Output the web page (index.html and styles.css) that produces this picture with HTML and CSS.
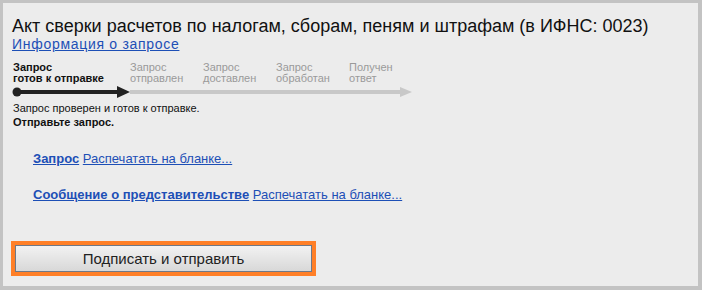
FILE: index.html
```html
<!DOCTYPE html>
<html>

<head>
    <meta name="viewport" content="width=device-width,initial-scale=1.0">
    <title>Акт сверки</title>
    <link rel="stylesheet" href="styles.css">
</head>

<body>
    <div class="panel">
        <h1 class="title">Акт сверки расчетов по налогам, сборам, пеням и штрафам (в ИФНС: 0023)</h1>
        <a class="info-link" href="#">Информация о запросе</a>

        <div class="steps">
            <div class="step step-current">Запрос<br>готов к отправке</div>
            <div class="step">Запрос<br>отправлен</div>
            <div class="step">Запрос<br>доставлен</div>
            <div class="step">Запрос<br>обработан</div>
            <div class="step">Получен<br>ответ</div>
        </div>
        <svg class="progress" width="402" height="14" viewBox="0 0 402 14">
            <rect x="118" y="5" width="272" height="4" fill="#c8c8c8" />
            <polygon points="388,2 400,7 388,12" fill="#c8c8c8" />
            <rect x="5" y="5" width="103" height="4" fill="#222" />
            <circle cx="5" cy="7" r="4.5" fill="#222" />
            <polygon points="105,1 118,7 105,13" fill="#222" />
        </svg>

        <p class="status">Запрос проверен и готов к отправке.<br><b>Отправьте запрос.</b></p>

        <div class="docs">
            <div class="doc">
                <a class="doc-name" href="#">Запрос</a>
                <a class="doc-print" href="#">Распечатать на бланке...</a>
            </div>
            <div class="doc">
                <a class="doc-name" href="#">Сообщение о представительстве</a>
                <a class="doc-print" href="#">Распечатать на бланке...</a>
            </div>
        </div>

        <button class="send-button">Подписать и отправить</button>
    </div>
</body>

</html>
```

FILE: styles.css
```css
body {
    margin: 0;
    padding: 0;
    font-family: "Liberation Sans", Arial, sans-serif;
    color: #111;
}

.panel {
    height: 290px;
    box-sizing: border-box;
    background: #ececec;
    border-style: solid;
    border-color: #c3c3c3;
    border-width: 3px 4px 4px 3px;
    padding: 12px 0 0 9px;
    display: flex;
    flex-direction: column;
    align-items: flex-start;
}

.title {
    margin: 0;
    font-size: 18px;
    line-height: 22px;
    font-weight: normal;
    color: #111;
    white-space: nowrap;
}

.info-link {
    font-size: 14px;
    line-height: 15px;
    letter-spacing: 0.7px;
    color: #1d4fb6;
}

.steps {
    display: flex;
    margin-top: 10px;
    padding-left: 1px;
    font-size: 11px;
    line-height: 11px;
    color: #9a9a9a;
}

.step {
    width: 73px;
    white-space: nowrap;
}

.step-current {
    width: 117px;
    font-weight: bold;
    color: #111;
}

.progress {
    display: block;
    margin-top: 1px;
}

.status {
    margin: 2px 0 0 1px;
    font-size: 11px;
    line-height: 14px;
}

.docs {
    margin-top: 22px;
    padding-left: 21px;
    display: flex;
    flex-direction: column;
    gap: 20px;
}

.doc {
    font-size: 13px;
    line-height: 16px;
}

.doc a {
    color: #1d4fb6;
}

.doc-name {
    font-weight: bold;
}

.send-button {
    margin: 42px 0 0 3px;
    width: 297px;
    height: 27px;
    border: 1px solid #6f7886;
    outline: 4px solid #ff7f27;
    background: linear-gradient(#f2f2f2, #d8d8d8);
    font-family: "Liberation Sans", Arial, sans-serif;
    font-size: 15px;
    color: #222;
    cursor: pointer;
}
```
